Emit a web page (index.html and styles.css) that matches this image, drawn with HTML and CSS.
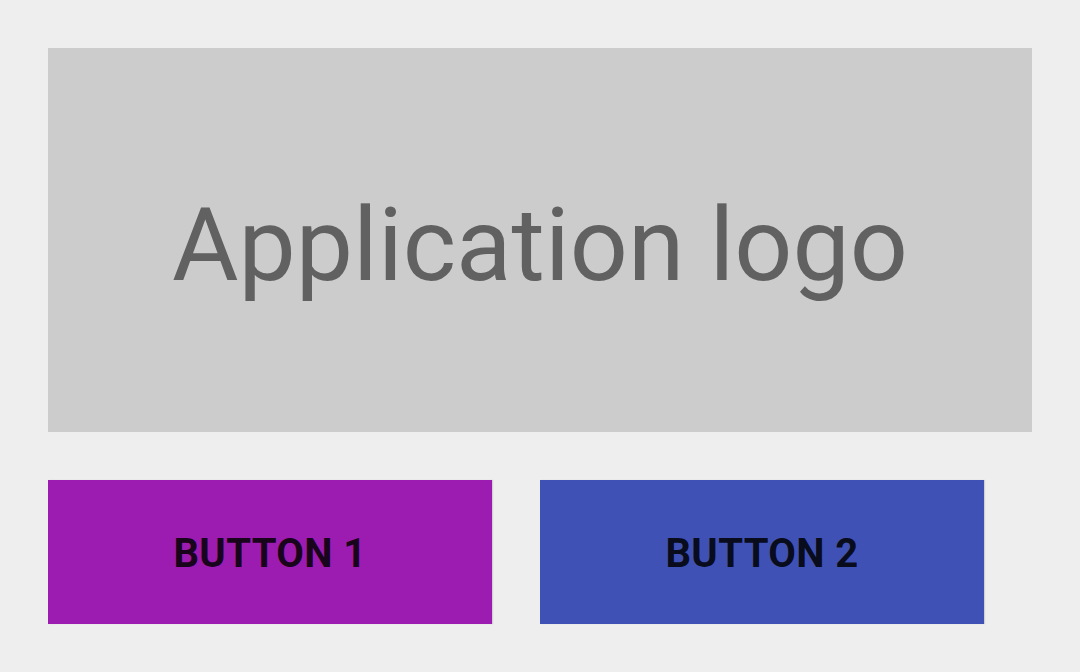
FILE: index.html
```html
<!DOCTYPE html>
<html lang="en">
<head>
    <meta charset="UTF-8">
    <meta name="viewport" content="width=device-width, initial-scale=1.0">
    <title>Application</title>
    <link rel="stylesheet" href="styles.css">
</head>
<body>
    <div class="screen">
        <div class="logo-box">
            <span class="logo-text">Application logo</span>
        </div>
        <div class="button-row">
            <button class="btn btn-purple">BUTTON 1</button>
            <button class="btn btn-indigo">BUTTON 2</button>
        </div>
    </div>
</body>
</html>
```

FILE: styles.css
```css
body {
    margin: 0;
    background-color: #eeeeee;
    font-family: Roboto, "Noto Sans", sans-serif;
}
.screen {
    padding: 48px;
    display: flex;
    flex-direction: column;
    gap: 48px;
}
.logo-box {
    height: 384px;
    background-color: #cccccc;
    display: flex;
    justify-content: center;
    align-items: center;
}
.logo-text {
    font-size: 102px;
    color: #616161;
    line-height: 1;
    margin-top: 10px;
}
.button-row {
    display: flex;
    gap: 48px;
}
.btn {
    width: 444px;
    height: 144px;
    border: none;
    border-radius: 0;
    font-family: Roboto, "Noto Sans", sans-serif;
    font-weight: 700;
    font-size: 40px;
    letter-spacing: 0.4px;
    color: rgba(0, 0, 0, 0.87);
    box-shadow: 1px 0 1px rgba(0, 0, 0, 0.12);
    padding: 3px 0 0;
    cursor: pointer;
}
.btn-purple {
    background-color: #9c1bb1;
}
.btn-indigo {
    background-color: #3f51b5;
}
```
